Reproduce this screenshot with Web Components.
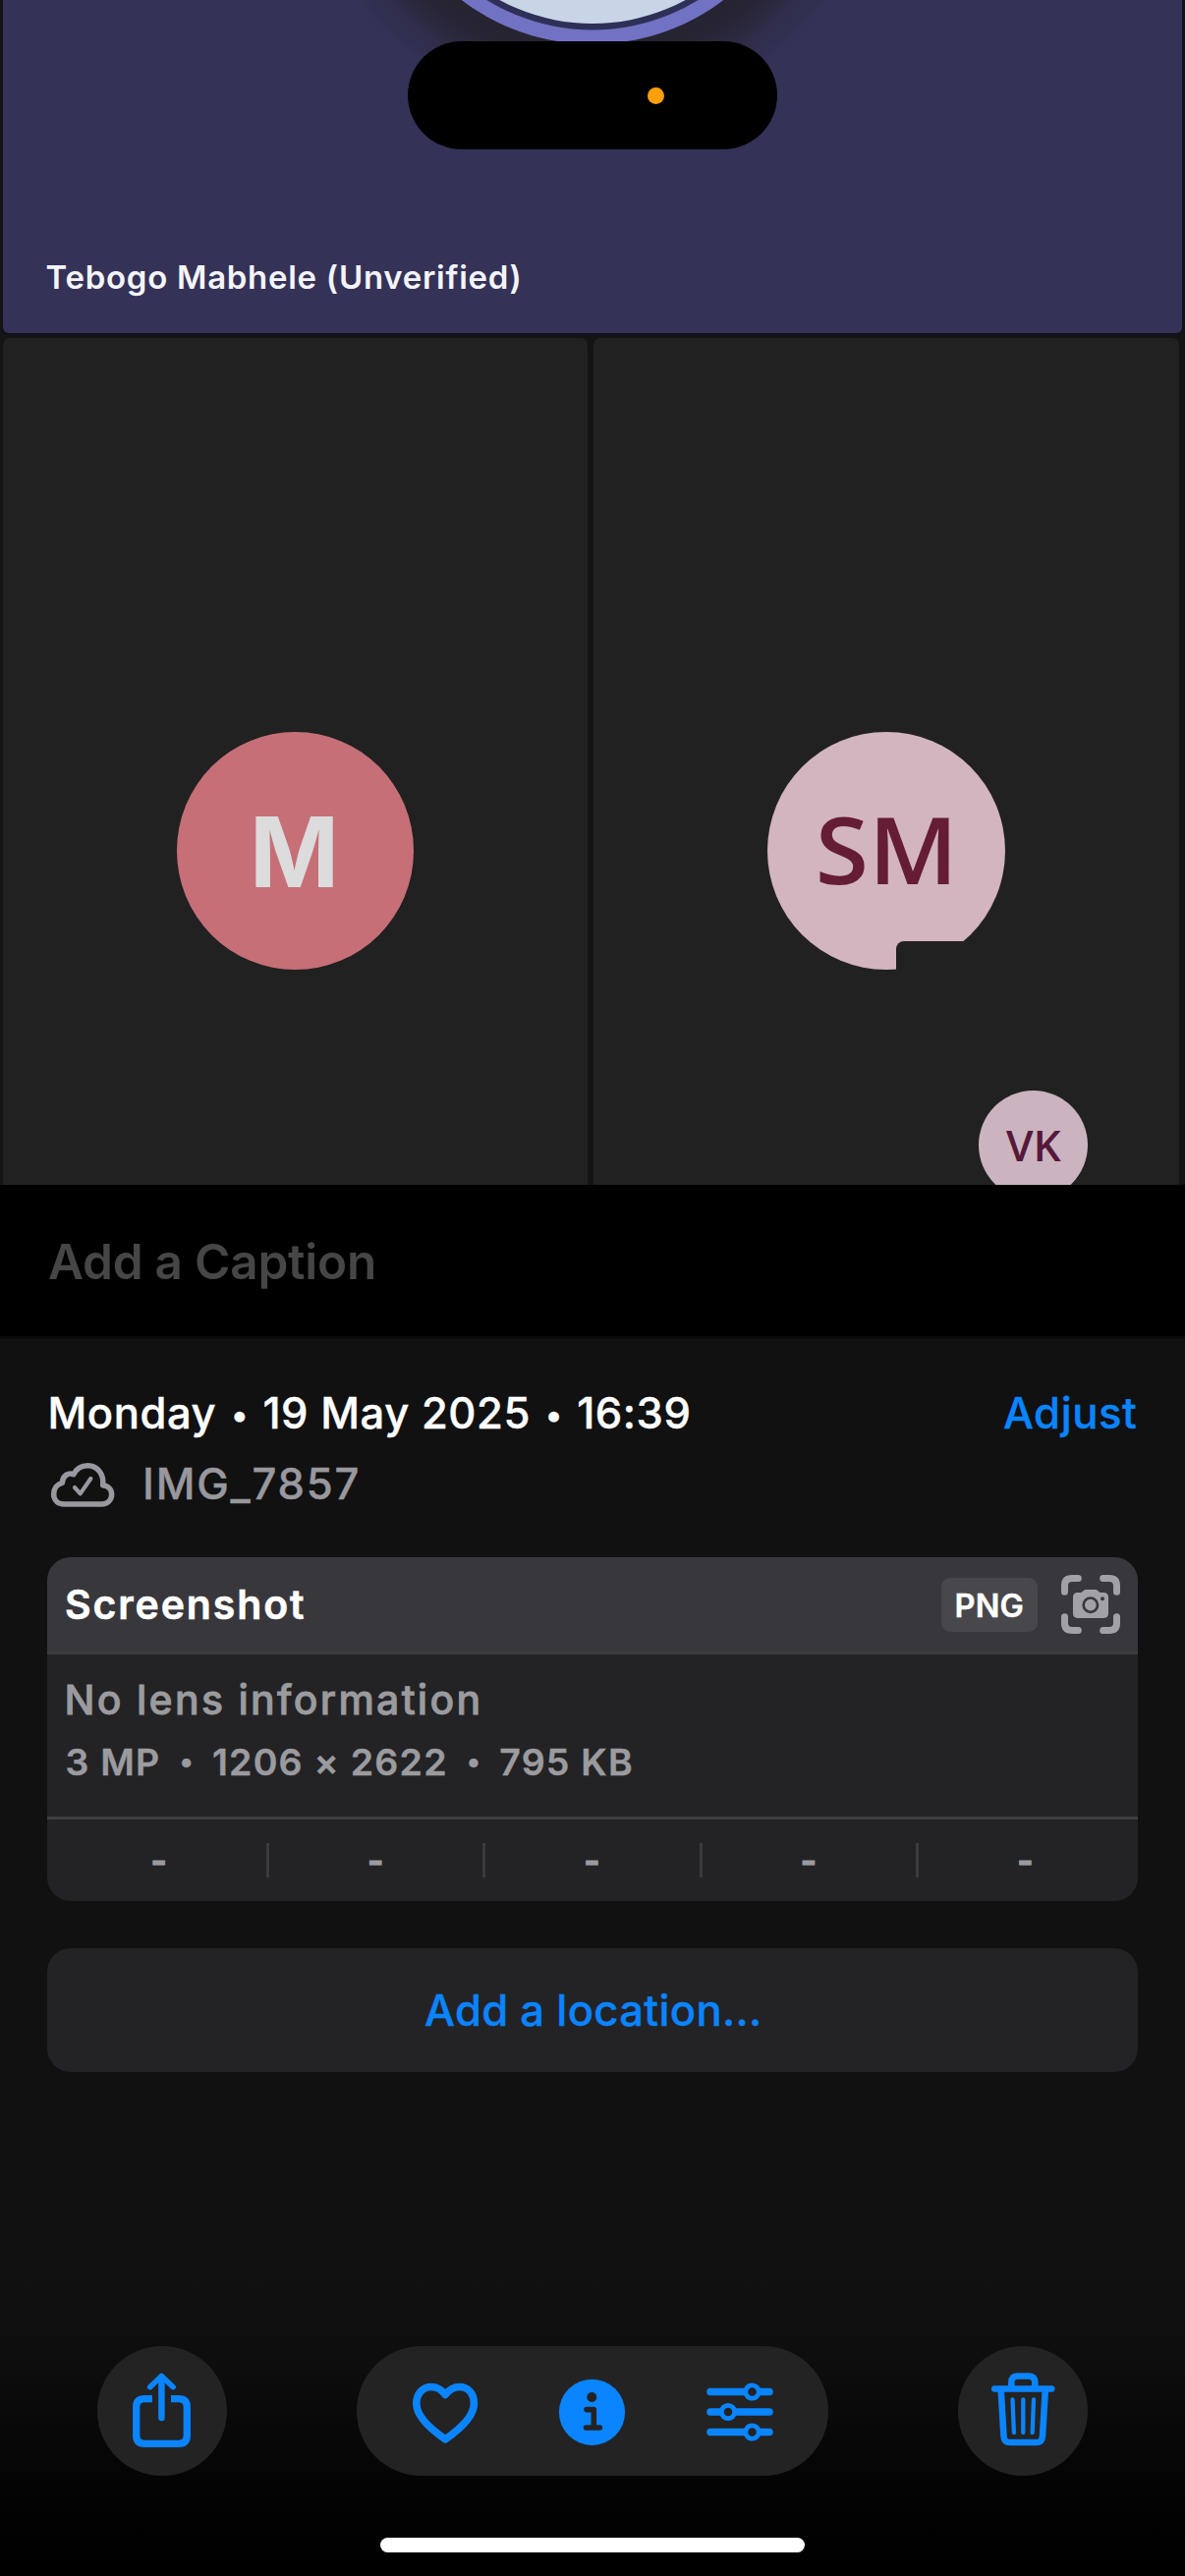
<!DOCTYPE html>
<html lang="en">
<head>
<meta charset="utf-8">
<title>Photo details</title>
<style>
  html, body { margin: 0; padding: 0; background: #000; }
  body { width: 1206px; height: 2622px; overflow: hidden; font-family: Inter, "Liberation Sans", sans-serif; }
</style>
</head>
<body>
<photo-screen></photo-screen>
<script>
const define = (name, html, setup) => {
  const tpl = document.createElement('template');
  tpl.innerHTML = html;
  customElements.define(name, class extends HTMLElement {
    connectedCallback() {
      if (this.shadowRoot) return;
      this.attachShadow({ mode: 'open' }).appendChild(tpl.content.cloneNode(true));
      if (setup) setup.call(this, this.shadowRoot);
    }
  });
};

/* A single line of text that spans exactly `w` pixels: tracked by default, widened with `stretch`. */
define('fit-label', `
  <style>
    :host { display: block; flex: none; white-space: nowrap; }
    span { display: inline-block; white-space: pre; }
    b { display: inline-block; font-weight: inherit; font-size: .76em; line-height: 1; text-align: center; letter-spacing: 0;
      width: var(--dot-w, 20px); vertical-align: var(--dot-y, 3px); }
  </style><span></span>`, function (root) {
  const span = root.querySelector('span');
  const text = this.getAttribute('text');
  const target = +this.getAttribute('w');
  span.innerHTML = text.replace(/•/g, '<b>•</b>');
  const cs = getComputedStyle(this);
  const ctx = document.createElement('canvas').getContext('2d');
  ctx.font = cs.fontWeight + ' ' + cs.fontSize + ' ' + cs.fontFamily;
  const m = ctx.measureText(text);
  const left = -m.actualBoundingBoxLeft;
  const right = m.width - m.actualBoundingBoxRight;
  const ink = span.getBoundingClientRect().width - left - right;
  const n = text.replace(/•/g, '').length;
  if (this.hasAttribute('stretch')) {
    span.style.transformOrigin = left + 'px 50%';
    span.style.transform = 'scaleX(' + (target / ink).toFixed(3) + ')';
  } else span.style.letterSpacing = ((target - ink) / (n - 1)).toFixed(3) + 'px';
  span.style.marginLeft = -left + 'px';
  this.style.width = target + 'px';
});

define('call-avatar', `
  <style>
    :host { display: flex; align-items: center; justify-content: center; box-sizing: border-box;
      width: 241.500px; height: 242px; border-radius: 50%; flex: none; }
  </style><slot></slot>`);

define('call-tile', `
  <style>
    :host { display: flex; align-items: center; justify-content: center; flex: none;
      box-sizing: border-box; background: #212121; position: relative; border-radius: 7px 7px 0 0; overflow: hidden; }
  </style><slot></slot>`);

define('speaker-tile', `
  <style>
    :host { display: flex; align-items: flex-end; height: 339px; margin: 0 3px; box-sizing: border-box;
      background: #343257; border-radius: 0 0 6px 6px; position: relative; overflow: hidden;
      box-shadow: 0 1px 0 2px #12121c; }
    .ring { position: absolute; left: 0; top: 0; }
    fit-label { margin: 0 0 32px 44.500px; font-size: 33px; font-weight: 600; line-height: 50px; color: #f4f4f8; position: relative; }
  </style>
  <svg class="ring" width="1200" height="160" viewBox="3 0 1200 160">
    <defs><radialGradient id="g" gradientUnits="userSpaceOnUse" cx="603" cy="-175" r="300">
      <stop offset=".76" stop-color="#262431"/><stop offset=".82" stop-color="#282637"/>
      <stop offset=".9" stop-color="#2f2d4a"/><stop offset="1" stop-color="#343257"/>
    </radialGradient></defs>
    <circle cx="603" cy="-175" r="300" fill="url(#g)"/>
    <circle cx="603" cy="-175" r="220" fill="#7172c4"/>
    <circle cx="603" cy="-175" r="205.5" fill="#2f3057"/>
    <circle cx="603" cy="-175" r="199" fill="#c8d5e7"/>
  </svg>
  <fit-label text="Tebogo Mabhele (Unverified)" w="481"></fit-label>`);

define('dynamic-island', `
  <style>
    :host { position: absolute; left: 415px; top: 42px; width: 376px; height: 110px; border-radius: 55px; background: #000;
      display: flex; align-items: center; box-sizing: border-box; padding-left: 244px; }
    i { width: 17px; height: 17px; border-radius: 50%; background: #ff9f0a; }
  </style><i></i>`);

define('photo-view', `
  <style>
    :host { display: flex; flex-direction: column; height: 1206px; background: #141414; overflow: hidden; position: relative; }
    .grid { display: flex; gap: 6px; padding: 5px 5px 0 3px; height: 862px; }
    call-tile { height: 1043px; }
    .l { width: 595px; } .r { width: 596px; }
    .m { background: #c66f77; padding-right: 2px; }
    .m fit-label { font-size: 99px; font-weight: 700; line-height: 120px; color: #dcdcdc; padding-top: 2px; }
    .sm { background: #d2b5bf; color: #651c35; position: relative; padding-right: 5px; }
    .sm fit-label { font: 600 95px/120px "Open Sans", sans-serif; padding-bottom: 6px; }
    .cut { position: absolute; left: 131px; top: 213px; width: 130px; height: 60px; background: #212121; border-radius: 8px 0 0 0; }
    .vk { position: absolute; left: 392px; top: 766px; width: 111px; height: 111px; background: #cbb4c0; color: #55193a; }
    .vk fit-label { font: 600 43.5px/60px "Open Sans", sans-serif; }
  </style>
  <speaker-tile></speaker-tile>
  <div class="grid">
    <call-tile class="l"><call-avatar class="m"><fit-label stretch text="M" w="79"></fit-label></call-avatar></call-tile>
    <call-tile class="r"><call-avatar class="sm"><fit-label stretch text="SM" w="132"></fit-label><div class="cut"></div></call-avatar>
      <call-avatar class="vk"><fit-label stretch text="VK" w="56"></fit-label></call-avatar></call-tile>
  </div>
  <dynamic-island></dynamic-island>`);

define('caption-field', `
  <style>
    :host { display: flex; align-items: center; height: 157px; box-sizing: border-box; background: #000;
      border-bottom: 3px solid #0a0a0a; padding: 2px 0 0 50px; color: #464646; }
    fit-label { font-size: 49.5px; font-weight: 600; line-height: 70px; }
  </style><fit-label text="Add a Caption" w="330"></fit-label>`);

define('photo-heading', `
  <style>
    :host { display: flex; flex-direction: column; font-size: 43.6px; font-weight: 500; line-height: 72px; -webkit-text-stroke: .4px currentColor; }
    div { display: flex; align-items: center; height: 72px; padding-top: 1px; box-sizing: border-box; }
    .top { justify-content: space-between; padding: 1px 2px 0 3.500px; color: #fff; --dot-w: 23px; --dot-y: 2px; }
    .adj { color: #0a84ff; }
    .file { color: #98989e; }
    svg { margin: -2px 0 0 -8px; display: block; }
  </style>
  <div class="top"><fit-label text="Monday • 19 May 2025 • 16:39" w="650"></fit-label><fit-label class="adj" text="Adjust" w="134"></fit-label></div>
  <div class="file">
    <svg width="108" height="65" viewBox="0 0 324 195" fill="none" stroke="#98989e" stroke-width="16.500" stroke-linejoin="round" stroke-linecap="round">
      <path d="M75 162H191C209 162 221 149 221 132C221 118 211 106 194 104C198 71 178 44 148 44C128 44 113 54 105 71C89 64 71 75 70 97C54 101 44 114 44 131C44 149 56 162 75 162Z"/>
      <path stroke-width="12.500" d="M108 111L125 130L157 84"/>
    </svg>
    <fit-label text="IMG_7857" w="215.500"></fit-label>
  </div>`);

define('scan-icon', `
  <style>:host{display:block;width:60px;height:60px} svg{display:block}</style>
  <svg width="60" height="60" viewBox="0 0 180 180" fill="none" stroke="#a1a1a7" stroke-width="21" stroke-linecap="round">
    <path d="M52 10.5H33C18 10.5 10.5 18 10.5 33V52M128 10.5H147C162 10.5 169.500 18 169.500 33V52M10.500 128V147C10.500 162 18 169.500 33 169.500H52M169.500 128V147C169.500 162 162 169.500 147 169.500H128"/>
    <path stroke="none" fill="#a1a1a7" d="M50 54H60C65 54 68 45 75 45H105C112 45 115 54 120 54H130C139 54 144 59 144 68V118C144 127 139 132 130 132H50C41 132 36 127 36 118V68C36 59 41 54 50 54Z"/>
    <circle cx="89.500" cy="92" r="21.500" stroke="#38373c" stroke-width="8"/>
    <circle cx="126" cy="73" r="6" stroke="none" fill="#38373c"/>
  </svg>`);

define('camera-card', `
  <style>
    :host { display: flex; flex-direction: column; height: 350px; border-radius: 24px; overflow: hidden; background: #232325; color: #9b9b9f; }
    header { display: flex; align-items: center; height: 96px; background: #38373c; border-bottom: 3px solid #3d3d40; padding: 0 18px 0 19px; color: #fff; }
    header > :first-child { font-size: 41px; font-weight: 600; line-height: 60px; -webkit-text-stroke: .6px currentColor; margin-right: auto; }
    .badge { display: flex; align-items: center; justify-content: center; width: 98px; height: 55px; border-radius: 9px; background: #48474b; margin-right: 24px; }
    .badge fit-label { font-size: 32.600px; font-weight: 600; line-height: 40px; padding-top: 1px; -webkit-text-stroke: .4px currentColor; }
    .info { height: 151px; padding: 14px 0 0 20px; border-bottom: 3px solid #3f3f41; line-height: 64px; }
    .a { font-size: 41px; font-weight: 500; -webkit-text-stroke: .8px currentColor; margin-left: .5px; }
    .b { font-size: 37.500px; font-weight: 600; margin-left: -.5px; -webkit-text-stroke: .4px currentColor; --dot-w: 31px; --dot-y: 4px; }
    .cells { display: flex; align-items: center; padding: 0 5.500px; height: 83px; }
    .cells div { flex: 1; display: flex; justify-content: center; font-size: 36px; font-weight: 700; line-height: 40px; -webkit-text-stroke: .8px currentColor; padding: 1px 1px 0 0; }
    .cells i { width: 3px; height: 35px; background: #3b3b3e; }
  </style>
  <header><fit-label text="Screenshot" w="242"></fit-label>
    <div class="badge"><fit-label text="PNG" w="67"></fit-label></div><scan-icon></scan-icon></header>
  <div class="info"><fit-label class="a" text="No lens information" w="418"></fit-label>
    <fit-label class="b" text="3 MP • 1206 × 2622 • 795 KB" w="575.500"></fit-label></div>
  <div class="cells"><div>-</div><i></i><div>-</div><i></i><div>-</div><i></i><div>-</div><i></i><div>-</div></div>`);

define('location-button', `
  <style>
    :host { display: flex; align-items: center; justify-content: center; height: 126px; border-radius: 24px; background: #232325; color: #0a84ff;
      font-size: 43.600px; font-weight: 500; line-height: 60px; margin-top: 48px; -webkit-text-stroke: .4px currentColor; }
    fit-label { padding: 1px 1px 0 0; }
  </style><fit-label text="Add a location..." w="339"></fit-label>`);

define('info-panel', `
  <style>
    :host { display: block; background: #111; height: 937px; box-sizing: border-box; padding: 39px 48px 0; }
    camera-card { margin-top: 39px; }
  </style>
  <photo-heading></photo-heading><camera-card></camera-card><location-button></location-button>`);

define('tool-bar', `
  <style>
    :host { display: flex; flex-direction: column; align-items: center; height: 322px; box-sizing: border-box; padding-top: 88px;
      background: linear-gradient(#111 0, #101010 50px, #0d0d0d 110px, #070707 190px, #020202 265px, #000 322px); }
    nav { display: flex; justify-content: space-between; align-self: stretch; padding: 0 99px; }
    nav > div { height: 132px; width: 132px; border-radius: 66px; background: #232323; }
    nav > .mid { width: 480px; }
    svg { display: block; fill: none; stroke: #0a84ff; stroke-linecap: round; stroke-linejoin: round; }
    .home { width: 432px; height: 15px; border-radius: 7.500px; background: #fff; margin-top: 63px; }
  </style>
  <nav>
    <div><svg width="132" height="132" viewBox="0 0 132 132">
      <path stroke-width="7.300" stroke-linecap="butt" d="M56 53.700H48C42.500 53.700 39.700 56.500 39.700 62V91C39.700 96.500 42.500 99.300 48 99.300H83C88.500 99.300 91.300 96.500 91.300 91V62C91.300 56.500 88.500 53.700 83 53.700H75"/>
      <path stroke-width="6.500" d="M65.400 31.500V73"/><path stroke-width="5.500" d="M53.700 41.700L65.400 30.500L77.200 41.700"/>
    </svg></div>
    <div class="mid"><svg width="480" height="132" viewBox="363 2388 480 132">
      <path stroke-width="7.600" d="M453.200 2482.800C439 2473 423.800 2460 423.800 2446.500C423.800 2436 430.500 2429.500 439 2429.500C445.500 2429.500 449.500 2432.500 453.200 2437.500C457 2432.500 461 2429.500 467.500 2429.500C476 2429.500 482.400 2436 482.400 2446.500C482.400 2460 467.400 2473 453.200 2482.800Z"/>
      <circle cx="602.500" cy="2455.300" r="33.600" fill="#0a84ff" stroke="none"/>
      <circle cx="602.300" cy="2440" r="5" fill="#232323" stroke="none"/>
      <path stroke="#232323" stroke-width="5.600" d="M597 2452.600H604.300V2470.800M596.500 2471H610.300"/>
      <g stroke-width="7.600"><path d="M723 2434.500H783M723 2455H783M723 2475.500H783"/></g>
      <g fill="#232323" stroke-width="4.800"><circle cx="765.500" cy="2434.500" r="6.700"/><circle cx="741" cy="2455" r="6.700"/><circle cx="765.500" cy="2475.500" r="6.700"/></g>
    </svg></div>
    <div><svg width="132" height="132" viewBox="975 2388 132 132">
      <path stroke-width="6.600" d="M1012.300 2431.500H1070.200"/>
      <path stroke-width="6.600" d="M1029.300 2430V2425C1029.300 2420.500 1031.500 2418.500 1036 2418.500H1046.500C1051 2418.500 1053.300 2420.500 1053.300 2425V2430"/>
      <path stroke-width="6.600" d="M1018.700 2433L1021.500 2479.500C1021.800 2484 1023.500 2486 1028 2486H1054.500C1059 2486 1060.700 2484 1061 2479.500L1063.800 2433"/>
      <path stroke-width="4.300" d="M1030.500 2442.500L1031.900 2476M1041.300 2442.500V2476M1052 2442.500L1050.700 2476"/>
    </svg></div>
  </nav>
  <div class="home"></div>`);

define('photo-screen', `
  <style>:host { display: flex; flex-direction: column; width: 1206px; height: 2622px; position: relative; background: #000; }</style>
  <photo-view></photo-view><caption-field></caption-field><info-panel></info-panel><tool-bar></tool-bar>`);
</script>
</body>
</html>
